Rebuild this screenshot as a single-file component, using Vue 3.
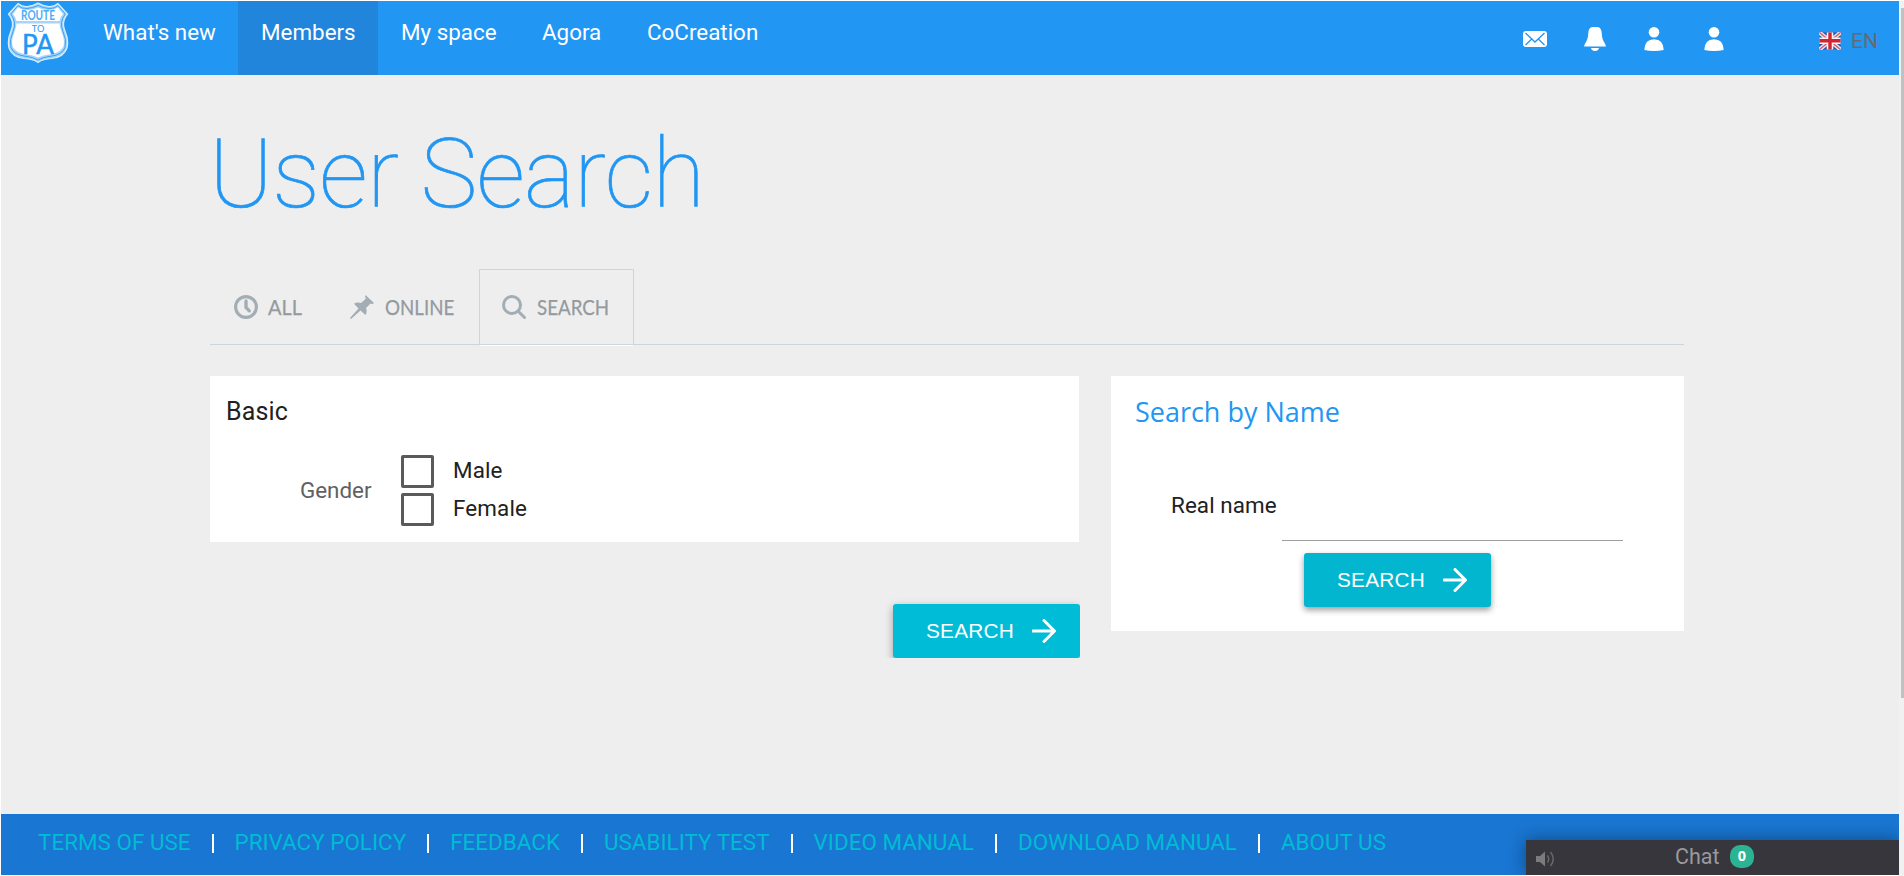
<script setup>
const nav = [
  { label: "What's new", cls: 'w-new' },
  { label: 'Members', cls: 'w-members active' },
  { label: 'My space', cls: 'w-space' },
  { label: 'Agora', cls: 'w-agora' },
  { label: 'CoCreation', cls: 'w-co' },
]
const links = ['TERMS OF USE', 'PRIVACY POLICY', 'FEEDBACK', 'USABILITY TEST', 'VIDEO MANUAL', 'DOWNLOAD MANUAL', 'ABOUT US']
</script>

<template>
  <div class="screen">
    <div class="page">
      <header class="topbar">
        <svg class="logo" width="62" height="62" viewBox="0 0 62 62">
          <path d="M11 1.5 Q15 5 20 4.500 Q26 4 31 1 Q36 4 42 4.500 Q47 5 51 1.500 L60.500 12 Q54 20 58 29 Q62 38 60 46 Q57 55 45 56.500 Q36 57 31 60.500 Q26 57 17 56.500 Q5 55 2 46 Q0 38 4 29 Q8 20 1.500 12 Z" fill="#a6d5fb" stroke="#d9eefe" stroke-width="1.2" />
          <path d="M11 3.500 Q15 7 20 6.500 Q26 6 31 3.500 Q36 6 42 6.500 Q47 7 51 3.500 L58.300 12 Q52 20 56 29.500 Q60 38 58 45.500 Q55 53 44 54.200 Q36 55 31 58 Q26 55 18 54.200 Q7 53 4 45.500 Q2 38 6 29.500 Q10 20 3.700 12 Z" fill="none" stroke="#3ba2f5" stroke-width="1" />
          <path d="M11 5.500 Q16 8.500 21 8 Q27 7.500 31 5.500 Q35 7.500 41 8 Q46 8.500 51 5.500 L56 12 Q53 15 52.500 19 L9.500 19 Q9 15 6 12 Z M9.500 21.500 L52.500 21.500 Q52.500 25 54.500 30 Q58 38 56.500 44.500 Q53 51 43 52.300 Q36 53 31 55.500 Q26 53 19 52.300 Q9 51 5.500 44.500 Q4 38 7.500 30 Q9.500 25 9.500 21.500 Z" fill="#fff" />
          <text x="31" y="18.200" text-anchor="middle" textLength="34" lengthAdjust="spacingAndGlyphs" class="lg-route">ROUTE</text>
          <text x="31" y="29.500" text-anchor="middle" textLength="12.500" lengthAdjust="spacingAndGlyphs" class="lg-to">TO</text>
          <text x="31" y="52" text-anchor="middle" textLength="32" lengthAdjust="spacingAndGlyphs" class="lg-pa">PA</text>
        </svg>
        <nav class="nav">
          <a v-for="n in nav" :key="n.label" class="nav-item" :class="n.cls">{{ n.label }}</a>
        </nav>
        <div class="tools">
          <svg class="mail" width="24" height="16" viewBox="0 0 24 16">
            <rect width="24" height="16" rx="3" fill="#fff" />
            <path d="M2.500 2 L12 11 L21.500 2 M2.500 14 L8.700 8 M21.500 14 L15.300 8" fill="none" stroke="#2196f3" stroke-width="1.300" />
          </svg>
          <svg class="bell" width="22" height="24" viewBox="0 0 22 24">
            <path d="M8 0 H14 Q17.500 1 17.700 6 Q18 12 20 15 Q21.500 17 22 19.500 H0 Q.5 17 2 15 Q4 12 4.300 6 Q4.500 1 8 0 Z M7 21 H15 Q14.500 24 11 24 Q7.500 24 7 21 Z" fill="#fff" />
          </svg>
          <svg v-for="i in 2" :key="i" class="user" width="20" height="24" viewBox="0 0 20 24">
            <circle cx="10" cy="5.300" r="5.300" fill="#fff" />
            <path d="M.3 23 Q.5 12.500 10 12.300 Q19.500 12.500 19.700 23 Q10 24.800 .3 23 Z" fill="#fff" />
          </svg>
          <svg class="flag" width="22" height="18" viewBox="0 0 22 18">
            <rect x=".5" y=".5" width="21" height="17" fill="#31549f" />
            <path d="M.5 .5 L21.500 17.500 M21.500 .5 L.5 17.500" stroke="#e5e4ec" stroke-width="4" />
            <path d="M.5 .5 L21.500 17.500 M21.500 .5 L.5 17.500" stroke="#d8546a" stroke-width="1.300" />
            <path d="M11 .5 V17.500 M.5 8.800 H21.500" stroke="#f5f5f7" stroke-width="6.500" />
            <path d="M11 .5 V17.500 M.5 8.800 H21.500" stroke="#d3232f" stroke-width="3.400" />
          </svg>
          <span class="lang">EN</span>
        </div>
      </header>

      <main class="content">
        <h1 class="title">User Search</h1>
        <div class="tabs">
          <a class="tab t-all">
            <svg width="24" height="24" viewBox="0 0 24 24" fill="none" stroke="#a2adb4">
              <circle cx="12" cy="12" r="10.400" stroke-width="3.100" />
              <path d="M12 6 V12.500 L15.300 15.800" stroke-width="3.300" stroke-linecap="round" />
            </svg>
            <span>ALL</span>
          </a>
          <a class="tab t-online">
            <svg width="24" height="24" viewBox="0 0 24 24">
              <path d="M15.500 0 L24 8 Q22.500 9.500 20.500 8.500 L16 13 Q17.500 17 15.500 20 L10.500 15.500 L1 24 L0 23 L8.500 13.500 L4 8.800 Q7 6.500 11 8 L15.800 3.800 Q14.500 1.500 15.500 0 Z" fill="#a2adb4" />
            </svg>
            <span>ONLINE</span>
          </a>
          <a class="tab t-search">
            <svg width="24" height="24" viewBox="0 0 24 24" fill="none" stroke="#a2adb4" stroke-width="3">
              <circle cx="10" cy="10" r="8.500" />
              <path d="M16 16 L22.500 22.500" stroke-linecap="round" />
            </svg>
            <span>SEARCH</span>
          </a>
        </div>

        <div class="columns">
          <section class="left">
            <div class="card basic">
              <h2 class="basic-title">Basic</h2>
              <div class="gender">
                <span class="gender-label">Gender</span>
                <div class="options">
                  <label class="option"><i class="box"></i><span>Male</span></label>
                  <label class="option"><i class="box"></i><span>Female</span></label>
                </div>
              </div>
            </div>
            <div class="clip">
              <button class="btn">
                <span>SEARCH</span>
                <svg width="24" height="24" viewBox="0 0 24 24" fill="none" stroke="#fff" stroke-width="3" stroke-linecap="round"><path d="M1 12 H22 M12 1.500 L22.500 12 L12 22.500" /></svg>
              </button>
            </div>
          </section>
          <section class="card name">
            <h2 class="name-title"><span>Search by Name</span></h2>
            <div class="field"><label>Real name</label><i class="line"></i></div>
            <button class="btn btn-dark">
              <span>SEARCH</span>
              <svg width="24" height="24" viewBox="0 0 24 24" fill="none" stroke="#fff" stroke-width="3" stroke-linecap="round"><path d="M1 12 H22 M12 1.500 L22.500 12 L12 22.500" /></svg>
            </button>
          </section>
        </div>
      </main>

      <footer class="footer">
        <template v-for="(l, i) in links" :key="l">
          <i v-if="i" class="sep"></i>
          <a class="link">{{ l }}</a>
        </template>
      </footer>
      <div class="chat">
        <svg class="speaker" width="19" height="16" viewBox="0 0 19 16">
          <path d="M0 5 H4 L9 .5 V15.500 L4 11 H0 Z" fill="#7b7b7d" />
          <path d="M11.500 4.500 Q14 8 11.500 11.500 M14.500 1 Q20 8 14.500 15" fill="none" stroke="#68686b" stroke-width="1.500" />
        </svg>
        <span class="chat-label">Chat</span>
        <span class="badge">0</span>
      </div>
    </div>
    <div class="scroll"><div class="thumb"></div></div>
  </div>
</template>

<style>
body { margin: 0; overflow: hidden; background: #fff; }
</style>

<style scoped>
* { box-sizing: border-box; }
.screen { width: 1904px; height: 876px; padding: 1px 0 1px 1px; display: flex; background: #fff; font-family: Roboto, "Liberation Sans", sans-serif; overflow: hidden; font-size: 22.4px; white-space: nowrap; }
.page { position: relative; width: 1898px; height: 874px; background: #eee; display: flex; flex-direction: column; overflow: hidden; }
.scroll { width: 5px; height: 875px; background: #f1f1f1; padding: 7px 0 0 2px; }
.thumb { height: 690px; background: #c1c1c1; }

.topbar { height: 74px; background: #2196f3; display: flex; color: #fff; flex: none; }
.logo { margin: 1px 0 0 6px; flex: none; }
.lg-route { font: 700 12.500px Lato, sans-serif; fill: #4fabf6; }
.lg-to { font: 400 9.500px Lato, sans-serif; fill: #2c9bf4; }
.lg-pa { font: 400 27px Lato, sans-serif; fill: #2196f3; stroke: #2196f3; stroke-width: .5px; }
.nav { display: flex; margin-left: 12px; }
.nav-item { padding: 17px 0 0 22px; line-height: 28px; height: 74px; }
.w-new { width: 157px; }
.w-members { width: 140px; padding-left: 23px; }
.w-space { width: 141px; padding-left: 23px; }
.w-agora { width: 105px; padding-left: 23px; }
.w-co { width: 155px; padding-left: 23px; }
.active { background: #2085db; }
.tools { display: flex; margin-left: auto; align-items: flex-start; }
.mail { margin: 30px 37px 0 0; }
.bell { margin: 26px 38px 0 0; }
.user { margin: 26px 40px 0 0; }
.flag { margin: 31px 10px 0 55px; }
.lang { width: 48px; font-size: 21px; line-height: 26px; margin-top: 27px; color: #666b70; }

.content { padding: 0 215px 0 209px; height: 739px; flex: none; }
.title { margin: 39px 0 0 -1px; height: 155px; line-height: 120px; font-size: 96px; font-weight: 100; letter-spacing: -.75px; color: #2196f3; -webkit-text-stroke: .7px #2196f3; }
.tabs { display: flex; height: 76px; border-bottom: 1px solid #c9d5df; }
.tab { display: flex; align-items: flex-start; padding-top: 26px; color: #949a9f; font: 20.800px Lato, "Open Sans", sans-serif; line-height: 24px; height: 77px; }
.tab svg { flex: none; }
.t-all { width: 116px; padding-left: 24px; }
.t-online { width: 153px; padding-left: 24px; }
.t-search { width: 155px; padding-left: 22px; padding-top: 25px; border: 1px solid #c9d5df; border-bottom-color: #fff; }
.tab span { margin-left: 11px; transform-origin: left; transform: scaleX(.9); -webkit-text-stroke: .25px #949a9f; }
.t-all span { margin-left: 10px; transform: scaleX(.96); }

.columns { display: flex; justify-content: space-between; margin-top: 31px; }
.left { width: 870px; }
.card { background: #fff; }
.basic { width: 869px; height: 166px; padding: 20px 16px; }
.basic-title { margin: 0; font-weight: 400; font-size: 25px; line-height: 32px; letter-spacing: .15px; color: #212121; }
.gender { display: flex; margin-top: 27px; padding-left: 74px; color: #212121; }
.gender-label { width: 101px; line-height: 28px; margin-top: 21px; color: #616161; }
.options { display: flex; flex-direction: column; gap: 5px; }
.option { display: flex; height: 33px; }
.option span { margin-left: 19px; line-height: 28px; margin-top: 1px; letter-spacing: .15px; }
.box { width: 33px; height: 33px; border: 3px solid #5a5a5a; border-radius: 2px; }
.clip { margin-top: 52px; padding: 10px 0 0 20px; margin-left: 663px; width: 207px; height: 64px; overflow: hidden; }
.btn { display: flex; align-items: center; width: 187px; height: 54px; padding: 0 0 0 33px; border: 0; border-radius: 3px; background: #00bcd7; color: #fff; font: 20.800px "Liberation Sans", sans-serif; letter-spacing: .2px; box-shadow: 0 3px 8px rgba(0,0,0,.35); }
.btn span { width: 106px; text-align: left; }
.btn-dark { background: #03b6cf; margin: 12px 0 0 193px; box-shadow: 0 3px 6px rgba(0,0,0,.4); }
.name { width: 573px; height: 255px; }
.name-title { margin: 0; padding: 15px 0 0 24px; font: 400 28px "Open Sans", sans-serif; line-height: 40px; color: #2196f3; }
.name-title span { display: inline-block; transform-origin: left; transform: scaleX(.963); }
.field { display: flex; align-items: flex-start; padding: 60px 0 0 60px; height: 110px; color: #212121; }
.field label { width: 111px; line-height: 28px; letter-spacing: .1px; }
.line { width: 341px; height: 50px; border-bottom: 1px solid #9e9e9e; }

.footer { height: 61px; background: #1976d2; display: flex; align-items: flex-start; padding: 14px 0 0 37px; flex: none; color: #00bcd4; }
.link { line-height: 28px; letter-spacing: .03px; }
.sep { width: 2px; height: 19px; margin: 6px 21px 0; background: #fff; }
.chat { position: absolute; left: 1525px; bottom: 0; width: 373px; height: 35px; background: #37363c; display: flex; box-shadow: 0 0 18px rgba(0,0,0,.4); }
.speaker { margin: 11px 0 0 10px; }
.chat-label { width: 55px; margin: 3px 0 0 120px; line-height: 28px; color: #9a9a9c; font-size: 21.500px; }
.badge { width: 24px; height: 23px; margin-top: 5px; border-radius: 10px; background: #2cb393; color: #fff; font: 700 14.500px "Open Sans", sans-serif; line-height: 22px; text-align: center; }
</style>
